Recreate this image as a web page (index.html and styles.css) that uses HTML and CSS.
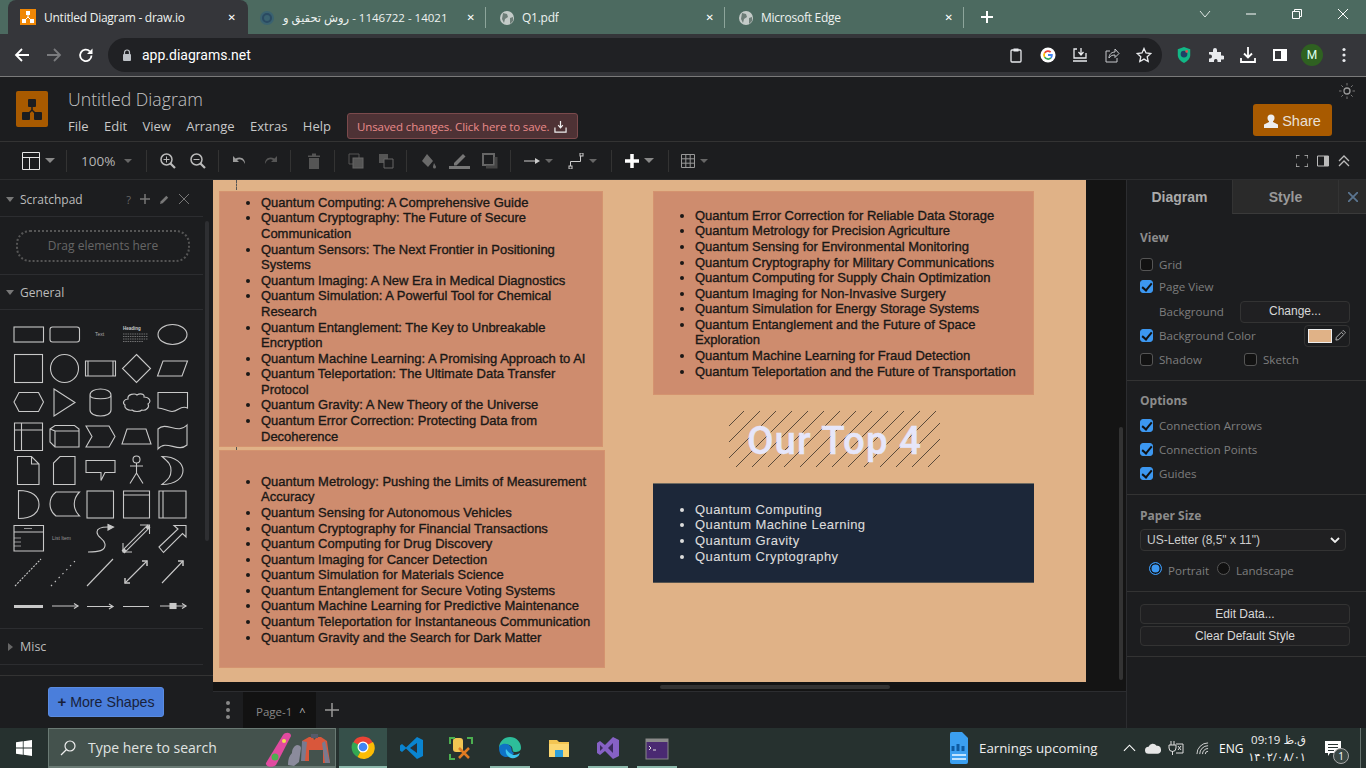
FILE: index.html
```html
<!DOCTYPE html>
<html lang="en">
<head>
<meta charset="utf-8">
<title>Untitled Diagram - draw.io</title>
<link rel="stylesheet" href="styles.css">
</head>
<body>
<div class="tabstrip">
  <div class="tab tab-active">
    <svg class="fav" viewBox="0 0 16 16"><rect width="16" height="16" fill="#f08705"/><path d="M8 4v4M8 8l-4 4M8 8l4 4" stroke="#fff" fill="none"/><rect x="6" y="2" width="4" height="4" fill="#fff"/><rect x="2" y="10" width="4" height="4" fill="#fff"/><rect x="10" y="10" width="4" height="4" fill="#fff"/></svg>
    <span class="tab-title">Untitled Diagram - draw.io</span>
    <span class="tab-x">✕</span>
  </div>
  <div class="tab tab-2">
    <svg class="fav" viewBox="0 0 16 16"><circle cx="8" cy="8" r="7" fill="#3a6270"/><circle cx="8" cy="8" r="4" fill="none" stroke="#2a4a62" stroke-width="2"/></svg>
    <span class="tab-title tab-title-rtl">14021 - 1146722 - روش تحقیق و</span>
    <span class="tab-x">✕</span>
  </div>
  <div class="tab">
    <svg class="fav" viewBox="0 0 16 16"><circle cx="8" cy="8" r="7" fill="#c4cbc8"/><path d="M4 3l4 1 1 3-3 2-1 4-2-4zM11 8l3-1 0 4-3 3z" fill="#6d7d77"/></svg>
    <span class="tab-title">Q1.pdf</span>
    <span class="tab-x">✕</span>
  </div>
  <div class="tab">
    <svg class="fav" viewBox="0 0 16 16"><circle cx="8" cy="8" r="7" fill="#c4cbc8"/><path d="M4 3l4 1 1 3-3 2-1 4-2-4zM11 8l3-1 0 4-3 3z" fill="#6d7d77"/></svg>
    <span class="tab-title">Microsoft Edge</span>
    <span class="tab-x">✕</span>
  </div>
  <svg class="newtab" viewBox="0 0 14 14"><path d="M7 1v12M1 7h12" stroke="#fff" stroke-width="2"/></svg>
  <div class="winctl">
    <svg class="wc" viewBox="0 0 12 12"><path d="M1 3l5 6 5-6" stroke="#dfe6e3" fill="none"/></svg>
    <svg class="wc" viewBox="0 0 12 12"><path d="M1 6h10" stroke="#fff"/></svg>
    <svg class="wc" viewBox="0 0 12 12"><path d="M1.500 3.500h7v7h-7zM3.500 3.500v-2h7v7h-2" stroke="#fff" fill="none"/></svg>
    <svg class="wc" viewBox="0 0 12 12"><path d="M1 1l10 10M11 1L1 11" stroke="#fff"/></svg>
  </div>
</div>

<div class="omnibar">
  <div class="navs">
    <svg class="nav" viewBox="0 0 16 16"><path d="M15 8H2M8 2L2 8l6 6" stroke="#fff" stroke-width="1.800" fill="none"/></svg>
    <svg class="nav" viewBox="0 0 16 16"><path d="M1 8h13M8 2l6 6-6 6" stroke="#7a7b7e" stroke-width="1.800" fill="none"/></svg>
    <svg class="nav" viewBox="0 0 16 16"><path d="M13.500 8.500a5.700 5.700 0 1 1-1.700-4.200" stroke="#fff" stroke-width="1.800" fill="none"/><path d="M14.500 1.500v5.500h-5.500z" fill="#fff"/></svg>
  </div>
  <div class="urlbox">
    <svg class="lock" viewBox="0 0 10 12"><path d="M2.500 5V3.500a2.500 2.500 0 0 1 5 0V5" stroke="#bdc1c6" fill="none" stroke-width="1.200"/><rect x="1" y="5" width="8" height="7" rx="1" fill="#bdc1c6"/></svg>
    <span class="url">app.diagrams.net</span>
    <div class="url-icons">
      <svg class="ui" viewBox="0 0 16 16"><rect x="3" y="3" width="10" height="12" rx="1" stroke="#e8eaed" stroke-width="1.300" fill="none"/><rect x="5.500" y="1.500" width="5" height="3" fill="#e8eaed"/></svg>
      <svg class="ui" viewBox="0 0 18 18"><circle cx="9" cy="9" r="8.500" fill="#fff"/><path d="M5.200 6.600A4.500 4.500 0 0 1 12 5.700" stroke="#ea4335" stroke-width="2" fill="none"/><path d="M5.200 6.600a4.500 4.500 0 0 0 0 4.800" stroke="#fbbc05" stroke-width="2" fill="none"/><path d="M5.200 11.400A4.500 4.500 0 0 0 12.200 12.200" stroke="#34a853" stroke-width="2" fill="none"/><path d="M9 9h4.400a4.500 4.500 0 0 1-1.200 3.200" stroke="#4285f4" stroke-width="2" fill="none"/></svg>
      <svg class="ui" viewBox="0 0 16 16"><path d="M5 2H2v9h12V6M1 14h14" stroke="#e8eaed" stroke-width="1.300" fill="none"/><path d="M9 1v6M6.500 5L9 8l2.500-3" stroke="#e8eaed" stroke-width="1.300" fill="none"/></svg>
      <svg class="ui" viewBox="0 0 16 16"><path d="M6 4H2v11h11v-4" stroke="#c7c9cc" fill="none"/><path d="M5 11c0-4 3-6 6-6V2l4 4.500-4 4V8c-3 0-5 1-6 3z" stroke="#c7c9cc" fill="none"/></svg>
      <svg class="ui" viewBox="0 0 16 16"><path d="M8 1.500l2 4.500 4.800.5-3.600 3.200 1 4.800L8 12.100 3.800 14.500l1-4.800L1.200 6.500 6 6z" stroke="#e8eaed" stroke-width="1.300" fill="none"/></svg>
    </div>
  </div>
  <div class="ext-icons">
    <svg class="ui" viewBox="0 0 16 18"><path d="M8 0l7 2.500V9c0 4-3 7-7 9-4-2-7-5-7-9V2.500z" fill="#12b886"/><circle cx="8" cy="8" r="3.800" fill="#1c4466"/><circle cx="11" cy="5" r="1.500" fill="#e05050"/></svg>
    <svg class="ui" viewBox="0 0 16 16"><path d="M1 5h4V3a2 2 0 0 1 4 0v2h4v3.500h1.500a2 2 0 0 1 0 4H13V15H9.500v-1.500a1.800 1.800 0 0 0-3.500 0V15H1v-3.500h1a2 2 0 0 0 0-4H1z" fill="#e8eaed"/></svg>
    <svg class="ui" viewBox="0 0 16 16"><path d="M8 0v10M4 6.500L8 10.500l4-4M1 11v4h14v-4" stroke="#fff" stroke-width="1.800" fill="none"/></svg>
    <svg class="ui" viewBox="0 0 16 16"><rect x="1" y="2" width="14" height="12" fill="#fff"/><rect x="3" y="4" width="6" height="8" fill="#35363a"/></svg>
    <span class="avatar">M</span>
    <svg class="ui" viewBox="0 0 16 16"><circle cx="8" cy="2.500" r="1.600" fill="#e8eaed"/><circle cx="8" cy="8" r="1.600" fill="#e8eaed"/><circle cx="8" cy="13.500" r="1.600" fill="#e8eaed"/></svg>
  </div>
</div>

<header class="app-header">
  <svg class="logo" viewBox="0 0 32 36"><rect width="32" height="36" rx="2" fill="#a85a00"/><path d="M16 13v6M16 19l-6 6M16 19l6 6" stroke="#1c1d1f" stroke-width="1.500"/><rect x="12" y="8" width="8" height="8" rx="1" fill="#1c1d1f"/><rect x="6" y="21" width="8" height="8" rx="1" fill="#1c1d1f"/><rect x="18" y="21" width="8" height="8" rx="1" fill="#1c1d1f"/></svg>
  <div class="header-body">
    <div class="doc-title">Untitled Diagram</div>
    <div class="menu-row">
      <nav class="menu"><span>File</span><span>Edit</span><span>View</span><span>Arrange</span><span>Extras</span><span>Help</span></nav>
      <div class="unsaved">Unsaved changes. Click here to save.
        <svg class="unsaved-ico" viewBox="0 0 14 14"><path d="M7 1v7M4.500 5.500L7 8.500l2.500-3M1 8v5h12V8" stroke="#eee" stroke-width="1.300" fill="none"/></svg>
      </div>
    </div>
  </div>
  <div class="header-right">
    <svg class="sun" viewBox="0 0 16 16"><circle cx="8" cy="8" r="3" stroke="#9a9a9a" fill="none" stroke-width="1.300"/><path d="M8 0v2.500M8 13.500V16M0 8h2.500M13.500 8H16M2.300 2.300l1.800 1.800M11.900 11.900l1.800 1.800M2.300 13.700l1.800-1.800M11.900 4.100l1.800-1.800" stroke="#777"/></svg>
    <div class="share"><svg class="share-ico" viewBox="0 0 14 14"><circle cx="7" cy="4" r="3.500" fill="#eee"/><path d="M5 6h4v2l5 2.500V14H0v-3.500L5 8z" fill="#eee"/></svg>Share</div>
  </div>
</header>

<div class="toolbar">
  <div class="tb-group tb-first">
    <svg class="i18" viewBox="0 0 18 18"><path d="M.5.500h17v17H.5zM.5 5.500h17M7.500 5.500v12" stroke="#e6e6e6" fill="none"/></svg>
    <i class="caret"></i>
  </div>
  <div class="tb-group tb-zoom"><span class="zoomval">100%</span><i class="caret caret-sm"></i></div>
  <div class="tb-group tb-gap">
    <svg class="i16" viewBox="0 0 16 16"><circle cx="6.500" cy="6.500" r="5.500" stroke="#bbb" stroke-width="1.500" fill="none"/><path d="M10.500 10.500L15 15" stroke="#bbb" stroke-width="2.200"/><path d="M6.500 3.500v6M3.500 6.500h6" stroke="#bbb"/></svg>
    <svg class="i16" viewBox="0 0 16 16"><circle cx="6.500" cy="6.500" r="5.500" stroke="#bbb" stroke-width="1.500" fill="none"/><path d="M10.500 10.500L15 15" stroke="#bbb" stroke-width="2.200"/><path d="M3.500 6.500h6" stroke="#bbb"/></svg>
  </div>
  <div class="tb-group tb-gap">
    <svg class="i16" viewBox="0 0 16 16"><path d="M1 3v6h6L5 7c2.500-1.500 6-.500 8 4 .500-5-4-8.500-9.500-5.500z" fill="#9a9a9a"/></svg>
    <svg class="i16" viewBox="0 0 16 16"><path d="M15 3v6H9l2-2C8.500 5.500 5 6.500 3 11c-.500-5 4-8.500 9.500-5.500z" fill="#555"/></svg>
  </div>
  <div class="tb-group tb-trash">
    <svg class="i16" viewBox="0 0 16 16"><path d="M2 2.500h12v1.500H2zM6 .500h4v2H6zM3 5h10v11H3z" fill="#555"/></svg>
  </div>
  <div class="tb-group tb-gap">
    <svg class="i16" viewBox="0 0 16 16"><path d="M1 1h10v10H1z" stroke="#555" fill="none"/><rect x="5" y="5" width="10" height="10" fill="#555" stroke="#666"/></svg>
    <svg class="i16" viewBox="0 0 16 16"><rect x="1" y="1" width="9" height="9" fill="#555"/><path d="M6 6h9v9H6z" stroke="#666" fill="#1c1d1f"/></svg>
  </div>
  <div class="tb-group tb-gap-format">
    <svg class="i16" viewBox="0 0 16 16"><path d="M6 1l6 7-5 6-6-6zM13 10c1 2 2 3 2 4a1.500 1.500 0 0 1-3 0c0-1 .500-2 1-4z" fill="#6a6a6a"/></svg>
    <svg class="i20" viewBox="0 0 21 16"><path d="M5 10L14 1l2.500 2.500-9 9H5z" fill="#777"/><rect y="13" width="21" height="3" fill="#777"/></svg>
    <svg class="i16" viewBox="0 0 16 16"><path d="M1 1h11v11H1z" stroke="#666" stroke-width="2" fill="none"/><path d="M14 4v10H4" stroke="#444" stroke-width="3" fill="none"/></svg>
  </div>
  <div class="tb-group tb-conn">
    <svg class="i16" viewBox="0 0 16 16"><path d="M0 8h12" stroke="#ccc"/><path d="M11 5l5 3-5 3z" fill="#ccc"/></svg><i class="caret caret-sm"></i>
    <svg class="i16 tb-wp" viewBox="0 0 16 16"><path d="M2.500 13V8.500h10V3" stroke="#ccc" fill="none"/><rect x="1" y="13" width="3" height="3" stroke="#ccc" fill="none"/><rect x="12" y="0" width="3" height="3" stroke="#ccc" fill="none"/></svg><i class="caret caret-sm"></i>
  </div>
  <div class="tb-group tb-plus">
    <svg class="i14" viewBox="0 0 14 14"><path d="M7 0v14M0 7h14" stroke="#fff" stroke-width="3.500"/></svg><i class="caret"></i>
  </div>
  <div class="tb-group tb-last">
    <svg class="i14" viewBox="0 0 14 14"><path d="M.5.500h13v13H.5zM.5 4.800h13M.5 9.200h13M4.800.5v13M9.200.5v13" stroke="#999" fill="none"/></svg><i class="caret caret-sm"></i>
  </div>
  <div class="tb-right">
    <svg class="i12" viewBox="0 0 12 12"><path d="M0 3.500V0h3.500M8.500 0H12v3.500M12 8.500V12H8.500M3.500 12H0V8.500" stroke="#bbb" fill="none" stroke-width="1.300"/></svg>
    <svg class="i12" viewBox="0 0 12 12"><path d="M.5 1h11v10H.5z" stroke="#bbb" fill="none"/><rect x="7" y="1" width="4.500" height="10" fill="#bbb"/></svg>
    <svg class="i12" viewBox="0 0 12 12"><path d="M1 6l5-5 5 5M1 11l5-5 5 5" stroke="#bbb" fill="none" stroke-width="1.300"/></svg>
  </div>
</div>

<main class="workspace">
  <aside class="sidebar">
    <div class="sb-row sb-scratch">
      <i class="tri-down"></i><span class="sb-title">Scratchpad</span>
      <span class="sb-tools">
        <span class="sb-q">?</span>
        <svg class="i10" viewBox="0 0 10 10"><path d="M5 0v10M0 5h10" stroke="#777" stroke-width="1.500"/></svg>
        <svg class="i11" viewBox="0 0 12 12"><path d="M1 11l1-3 6-6 2 2-6 6z" fill="#777"/></svg>
        <svg class="i10" viewBox="0 0 10 10"><path d="M0 0l10 10M10 0L0 10" stroke="#777"/></svg>
      </span>
    </div>
    <div class="sb-scratchbody"><div class="dropzone">Drag elements here</div></div>
    <div class="sb-row sb-general"><i class="tri-down"></i><span class="sb-title">General</span></div>
    <div class="shapes">
      <svg class="shapes-svg" viewBox="0 0 203 310" fill="none" stroke="#c8c8c8" stroke-width="1.100">
        <g transform="translate(0,-309)">
          <rect x="14" y="326" width="29.500" height="15"/><rect x="50" y="326" width="29.500" height="15" rx="2.500"/>
          <path d="M123 333h25M123 335.500h25M123 338h25M123 340.500h20" stroke-width=".6" stroke="#aaa" stroke-dasharray="1.500 .8"/>
          <ellipse cx="172.500" cy="333.500" rx="14.500" ry="10"/>
          <rect x="14.500" y="353.500" width="28" height="28"/><circle cx="64.500" cy="367.500" r="14"/><path d="M85.500 360h30v15h-30zM88 360v15M113 360v15"/><path d="M136.500 353.500l14 14-14 14-14-14z"/><path d="M163 360h24.500l-5.500 15h-24.500z"/>
          <path d="M19 391.500h19.500l5 9.500-5 9.500H19l-5-9.500z"/><path d="M54 388l21 13.500-21 13.500z"/><path d="M90 394c0-8 21-8 21 0v15c0 8-21 8-21 0zM90 394c0 5 21 5 21 0"/>
          <path d="M128 398c-1-5 7-6 9-4 3-2 8-1 7 2 5 0 8 4 4 7 2 3-2 7-6 6-2 2-8 2-10 0-4 1-8-2-7-5-3-2-1-6 3-6z"/><path d="M158 391.500h29.500V407c-8-4-10 6-18 3-4-1-7-3-11.500-3z"/>
          <path d="M14.500 422h28v27.500h-28zM14.500 429h28M21.500 422v27.500"/><path d="M50 428l5-3.500h19.500l4.500 3.500v18H55l-5-5zM55 430h24M55 430v16M50 428l5 2"/><path d="M86 425h23l6 10.500-6 10.500H86l6-10.500z"/><path d="M127 428h19l5 15h-29z"/><path d="M158 428c8-8 20 6 29-4v20c-9 8-21-6-29 4z"/>
        </g>
        <g transform="translate(0,-309)">
          <path d="M17.500 455.500h14l7.500 7.500v20.500H17.500zM31.500 455.500v7.500h7.500"/><path d="M60 455.500h15v28H53.500v-21.500z"/><path d="M86 459.500h29v12H105l-4 8 0-8H86z"/><circle cx="136.500" cy="458.500" r="3.500"/><path d="M136.500 462v10M130 465h13M136.500 472l-6.500 10.500M136.500 472l6.500 10.500"/><path d="M162 455.500c14 0 21 7 21 14s-7 14-21 14c7-6 9-8 9-14s-2-8-9-14z"/>
          <path d="M18.500 489.500c14 0 20.500 6 20.500 14s-6.500 14-20.500 14z"/><path d="M56 491h23.500c-7 7-7 17 0 24H56c-8-6-8-18 0-24z"/><rect x="87" y="490" width="26.500" height="27"/><path d="M123.500 490h26v27h-26zM123.500 494h26"/><path d="M159 490h27v27h-27zM163 490v27"/>
          <path d="M14 524.500h29.500V550H14zM14 531h29.500"/><path d="M14 537h7M14 541h7M14 545h7M24 527.500h8" stroke-width=".7"/><path d="M88 551c10 0 18-1 17-8-1-6-8-6-8-12 0-4 6-5 11-5"/><path d="M108 523.500l5.500 2.500-5.500 3z" fill="#c8c8c8"/>
          <path d="M123 551l26-26" stroke-width="4"/><path d="M125.500 548.500l21-21" stroke="#1c1d1f" stroke-width="2"/><path d="M123 542v9h9M140 524h9.500v9"/><path d="M159 546l19-18-4-3.500h12v11.500l-3.500-3.500-19 19z"/>
          <path d="M15 585l26-27" stroke-dasharray="2 1.300"/><path d="M51 585l26-27" stroke-dasharray="1.500 4"/><path d="M87 585l26-27"/><path d="M125 582l22-22M162 582l21-22"/><path d="M125 577v5h5M142 560h5v5M178 560h5v5" stroke-width="1.500"/>
          <path d="M14 605.500h29" stroke-width="3"/><path d="M52 605h26M87 605.500h26M123 605.500h26M160 605h26"/><path d="M74 602.500l4 2.500-4 2.500M109 603l4 2.500-4 2.500M182 602.500l4 2.500-4 2.500" stroke-width="1.200"/><rect x="170" y="602.500" width="6" height="5" fill="#c8c8c8"/>
        </g>
        <text x="95" y="26" class="sh-text">Text</text>
        <text x="123" y="20" class="sh-head">Heading</text>
        <text x="52" y="230" class="sh-li">List Item</text>
      </svg>
    </div>
    <div class="sb-row sb-misc"><i class="tri-right"></i><span class="sb-title sb-misc-t">Misc</span></div>
    <div class="sb-rest"></div>
    <div class="sb-foot"><div class="more-shapes"><b class="plus">+</b> More Shapes</div></div>
    <i class="sb-scroll"></i>
  </aside>

  <section class="center">
    <div class="canvas">
      <div class="paper">
        <i class="guide guide-a"></i>
        <i class="guide guide-b"></i>
        <div class="node node-a">
          <ul>
            <li>Quantum Computing: A Comprehensive Guide</li>
            <li>Quantum Cryptography: The Future of Secure Communication</li>
            <li>Quantum Sensors: The Next Frontier in Positioning Systems</li>
            <li>Quantum Imaging: A New Era in Medical Diagnostics</li>
            <li>Quantum Simulation: A Powerful Tool for Chemical Research</li>
            <li>Quantum Entanglement: The Key to Unbreakable Encryption</li>
            <li>Quantum Machine Learning: A Promising Approach to AI</li>
            <li>Quantum Teleportation: The Ultimate Data Transfer Protocol</li>
            <li>Quantum Gravity: A New Theory of the Universe</li>
            <li>Quantum Error Correction: Protecting Data from Decoherence</li>
          </ul>
        </div>
        <div class="node node-b">
          <ul>
            <li>Quantum Metrology: Pushing the Limits of Measurement Accuracy</li>
            <li>Quantum Sensing for Autonomous Vehicles</li>
            <li>Quantum Cryptography for Financial Transactions</li>
            <li>Quantum Computing for Drug Discovery</li>
            <li>Quantum Imaging for Cancer Detection</li>
            <li>Quantum Simulation for Materials Science</li>
            <li>Quantum Entanglement for Secure Voting Systems</li>
            <li>Quantum Machine Learning for Predictive Maintenance</li>
            <li>Quantum Teleportation for Instantaneous Communication</li>
            <li>Quantum Gravity and the Search for Dark Matter</li>
          </ul>
        </div>
        <div class="node node-c">
          <ul>
            <li>Quantum Error Correction for Reliable Data Storage</li>
            <li>Quantum Metrology for Precision Agriculture</li>
            <li>Quantum Sensing for Environmental Monitoring</li>
            <li>Quantum Cryptography for Military Communications</li>
            <li>Quantum Computing for Supply Chain Optimization</li>
            <li>Quantum Imaging for Non-Invasive Surgery</li>
            <li>Quantum Simulation for Energy Storage Systems</li>
            <li>Quantum Entanglement and the Future of Space Exploration</li>
            <li>Quantum Machine Learning for Fraud Detection</li>
            <li>Quantum Teleportation and the Future of Transportation</li>
          </ul>
        </div>
        <div class="node node-title">Our Top 4</div>
        <div class="node node-dark">
          <ul>
            <li>Quantum Computing</li>
            <li>Quantum Machine Learning</li>
            <li>Quantum Gravity</li>
            <li>Quantum Cryptography</li>
          </ul>
        </div>
      </div>
      <i class="scroll-h"></i>
      <i class="scroll-v"></i>
    </div>
    <div class="pagebar">
      <svg class="kebab" viewBox="0 0 4 18"><circle cx="2" cy="2" r="2" fill="#888"/><circle cx="2" cy="9" r="2" fill="#888"/><circle cx="2" cy="16" r="2" fill="#888"/></svg>
      <div class="pagetab">Page-1 <span class="pagecaret">^</span></div>
      <svg class="pageadd" viewBox="0 0 14 14"><path d="M7 0v14M0 7h14" stroke="#999" stroke-width="1.500"/></svg>
    </div>
  </section>

  <aside class="format">
    <div class="fm-tabs">
      <div class="fm-tab fm-tab-on">Diagram</div>
      <div class="fm-tab">Style</div>
      <div class="fm-close"><svg class="i10" viewBox="0 0 10 10"><path d="M0 0l10 10M10 0L0 10" stroke="#5b7590" stroke-width="1.800"/></svg></div>
    </div>
    <section class="fm-sec fm-view">
      <h3 class="fm-h">View</h3>
      <label class="row row-grid"><i class="cb"></i>Grid</label>
      <label class="row"><i class="cb cb-on"></i>Page View</label>
      <div class="row row-bg"><span class="row-indent">Background</span><span class="btn btn-change">Change...</span></div>
      <div class="row row-color"><i class="cb cb-on"></i>Background Color
        <span class="swatchbox"><i class="swatch"></i><svg class="i11" viewBox="0 0 12 12"><path d="M1 11l.5-3L7 2.500 9.500 5 4 10.500zM8 1.500l1-1 2.500 2.500-1 1" stroke="#bbb" fill="none"/></svg></span>
      </div>
      <div class="row row-shadow"><label class="half"><i class="cb"></i>Shadow</label><label class="half"><i class="cb"></i>Sketch</label></div>
    </section>
    <section class="fm-sec fm-options">
      <h3 class="fm-h">Options</h3>
      <label class="row row24 row-first"><i class="cb cb-on"></i>Connection Arrows</label>
      <label class="row row24"><i class="cb cb-on"></i>Connection Points</label>
      <label class="row row24"><i class="cb cb-on"></i>Guides</label>
    </section>
    <section class="fm-sec fm-paper">
      <h3 class="fm-h">Paper Size</h3>
      <div class="select">US-Letter (8,5" x 11")<svg class="selcaret" viewBox="0 0 10 6"><path d="M1 1l4 4 4-4" stroke="#eee" stroke-width="1.800" fill="none"/></svg></div>
      <div class="row radios"><i class="radio radio-on"></i><span class="radio-l1">Portrait</span><i class="radio"></i><span>Landscape</span></div>
    </section>
    <section class="fm-sec fm-actions">
      <div class="btn btn-wide">Edit Data...</div>
      <div class="btn btn-wide">Clear Default Style</div>
    </section>
  </aside>
</main>

<footer class="taskbar">
  <svg class="winlogo" viewBox="0 0 16 16"><path d="M0 2.300l6.800-1v6.300H0zM7.600 1.200L16 0v7.600H7.600zM0 8.400h6.800v6.300l-6.800-1zM7.600 8.400H16V16l-8.400-1.200z" fill="#fff"/></svg>
  <div class="search">
    <svg class="i16" viewBox="0 0 16 16"><circle cx="10" cy="6" r="5" stroke="#eee" fill="none" stroke-width="1.200"/><path d="M6.500 9.500L1 15" stroke="#eee" stroke-width="1.200"/></svg>
    <span class="search-t">Type here to search</span>
    <svg class="search-art" viewBox="0 0 66 36"><path d="M1 31L18 3c2-3 8-3 8 1L11 33c-3 3-11 2-10-2z" fill="#e14aa0"/><circle cx="10" cy="25" r="3.500" fill="#4caf50"/><circle cx="19" cy="9" r="2" fill="#f3e04e"/><path d="M23 33c0-5 1-9 4-12 0-4 2-7 5-8 2 0 4 1 4 3l-2 14-5 4z" fill="#8b8b9c"/><path d="M37 9l7-4 4 0 1 3 3-3 4 0 6 4 3 22H58V18H44v11h-7z" fill="#d9573b"/><path d="M37 9l-1 20h4l2-19zM60 9l5 22h-5l-3-20z" fill="#7a7a8e"/><path d="M46 2h7v4h-7z" fill="#565a6a"/></svg>
  </div>
  <div class="tb-apps">
    <div class="app app-on"><svg class="app-i" viewBox="0 0 24 24"><path d="M12 12L2 8A11 11 0 0 1 22 8z" fill="#ea4335"/><path d="M12 12l-5.500 10A11 11 0 0 1 2 7z" fill="#34a853"/><path d="M12 12l10-5a11 11 0 0 1-15.500 15z" fill="#fbbc05"/><circle cx="12" cy="12" r="5.500" fill="#fff"/><circle cx="12" cy="12" r="4.300" fill="#4285f4"/></svg></div>
    <div class="app"><svg class="app-i" viewBox="0 0 24 24"><path d="M17 1l6 3v16l-6 3-11-10.500L2 16l-2-1.500v-5L2 8l4 3.500z" fill="#0a84d0"/><path d="M17 7l-7 5 7 5z" fill="#26313a"/></svg></div>
    <div class="app"><svg class="app-i" viewBox="0 0 24 24"><rect x="4" y="2" width="10" height="14" rx="3" fill="#f3c552"/><path d="M1 8V2h5M23 8V2h-5M1 18v5h5" stroke="#4caf50" stroke-width="2" fill="none"/><path d="M10 12l10 10M20 12L10 22" stroke="#e07b22" stroke-width="2.500"/></svg></div>
    <div class="app app-ul"><svg class="app-i" viewBox="0 0 24 24"><path d="M1 12a11 11 0 0 1 22 0c0 3-3 4-6 4-4 0-1-3-4-6-4-3-10-1-12 2z" fill="#2dbd9a"/><path d="M1 12c0-4 8-6 11-2 3 2 0 5 4 7-4 6-15 6-15-5z" fill="#0f72c5"/><path d="M8 13a7 7 0 0 0 14 4c-5 3-9 3-14-4z" fill="#3bc4ee"/></svg></div>
    <div class="app"><svg class="app-i" viewBox="0 0 24 24"><path d="M2 4h8l2 2h10v15H2z" fill="#f3c552"/><rect x="2" y="8" width="20" height="13" fill="#fbd771"/><rect x="8" y="14" width="8" height="7" fill="#2e9fdb"/></svg></div>
    <div class="app app-ul"><svg class="app-i" viewBox="0 0 24 24"><path d="M17 1l6 3v16l-6 3-8-8-5 4-3-2V7l3-2 5 4z" fill="#8661c5"/><path d="M17 7l-5 5 5 5z" fill="#3a2a5c"/><path d="M4 9v6l3-3z" fill="#3a2a5c"/></svg></div>
    <div class="app app-ul"><svg class="app-i" viewBox="0 0 24 24"><rect x="1" y="3" width="22" height="20" fill="#4a2a72" stroke="#888"/><path d="M1 3h22v3H1z" fill="#8a8a8a"/><path d="M4 10l2 2-2 2M8 14h3" stroke="#ddd" fill="none"/></svg></div>
  </div>
  <div class="tray">
    <svg class="news" viewBox="0 0 18 32"><path d="M0 2a2 2 0 0 1 2-2h10l6 6v24a2 2 0 0 1-2 2H2a2 2 0 0 1-2-2z" fill="#3b9ff0"/><path d="M3 14v5M8 12v7M13 14v5" stroke="#0e5aa0" stroke-width="3"/><path d="M2 23h14M2 27h14" stroke="#bfe3ff" stroke-width="2"/></svg>
    <span class="news-t">Earnings upcoming</span>
    <svg class="chev" viewBox="0 0 14 8"><path d="M1 7l6-6 6 6" stroke="#fff" fill="none" stroke-width="1.200"/></svg>
    <svg class="t-cloud" viewBox="0 0 18 12"><path d="M4 12a4 4 0 0 1 0-8 5 5 0 0 1 9-1 4.500 4.500 0 0 1 1 9z" fill="#e6e6e6"/></svg>
    <svg class="t-batt" viewBox="0 0 16 14"><path d="M3 0v4M6 0v4M1 4h7v3a3 3 0 0 1-7 0zM4.500 10v4" stroke="#ddd" fill="none"/><path d="M8 3h7v9H8" stroke="#ddd" fill="none"/><path d="M10 5l3 4M13 5l-3 4" stroke="#ddd"/></svg>
    <svg class="t-wifi" viewBox="0 0 14 14"><path d="M1 13A12 12 0 0 1 13 1M4 13a9 9 0 0 1 9-9M7 13a6 6 0 0 1 6-6M10 13a3 3 0 0 1 3-3" stroke="#ddd" fill="none"/></svg>
    <span class="eng">ENG</span>
    <div class="clock"><span class="clock-t">ق.ظ 09:19</span><span class="clock-d">۱۴۰۲/۰۸/۰۱</span></div>
    <div class="notif">
      <svg class="notif-i" viewBox="0 0 16 16"><path d="M0 0h16v12H5l-2 3v-3H0z" fill="#fff"/><path d="M3 3.500h10M3 6.500h10M3 9.500h6" stroke="#2a3533"/></svg>
      <span class="notif-b">1</span>
    </div>
    <i class="showdesk"></i>
  </div>
</footer>
</body>
</html>
```

FILE: styles.css
```css
* { box-sizing: border-box; }
html, body { margin: 0; padding: 0; }
body {
  width: 1366px; height: 768px; overflow: hidden;
  display: flex; flex-direction: column;
  font-family: "Open Sans", "DejaVu Sans", sans-serif;
  background: #1c1d1f; color: #ccc;
}
svg { display: block; flex: none; }
i { display: block; flex: none; }

/* chrome tabs */
.tabstrip { height: 34px; background: #4c6a60; display: flex; padding-left: 8px; flex: none; align-items: stretch; }
.tab { width: 239px; display: flex; align-items: center; padding: 0 10px 0 13px; position: relative; color: #eef2f0; font-size: 12px; border-right: 1px solid #8da59b; margin: 7px 0 6px; }
.tab-active { width: 240px; background: #35363a; border-radius: 8px 8px 0 0; border-right: 0; margin: 0; padding: 0 12px; }
.tab-2 { width: 238px; padding-left: 11px; }
.fav { width: 16px; height: 16px; margin-right: 7px; }
.tab-active .fav { margin-right: 8px; }
.tab-2 .fav { margin-right: 8px; }
.tab-title { font-size: 12px; white-space: nowrap; overflow: hidden; letter-spacing: -.25px; }
.tab-title-rtl { font-size: 11.500px; direction: rtl; letter-spacing: -.3px; overflow: visible; }
.tab-x { margin-left: auto; font-size: 10px; color: #fff; font-family: "DejaVu Sans", sans-serif; }
.newtab { width: 14px; height: 14px; margin: 10px 0 0 16px; }
.winctl { margin-left: auto; display: flex; gap: 34px; padding: 8px 17px 0 0; }
.wc { width: 12px; height: 12px; }

/* omnibar */
.omnibar { height: 43px; flex: none; background: #35363a; border-bottom: 1px solid #7a7a7a; display: flex; align-items: center; padding: 0 14px; }
.navs { display: flex; gap: 16px; width: 94px; }
.nav { width: 16px; height: 16px; }
.urlbox { width: 1054px; height: 34px; border-radius: 17px; background: #202124; display: flex; align-items: center; padding: 0 10px 0 14px; }
.lock { width: 10px; height: 12px; margin-right: 10px; }
.url { font-family: Roboto, sans-serif; font-size: 14px; color: #fff; }
.url-icons { margin-left: auto; display: flex; gap: 16px; align-items: center; }
.ui { width: 16px; height: 16px; }
.ext-icons { display: flex; align-items: center; gap: 16px; margin-left: 14px; }
.avatar { width: 22px; height: 22px; margin: 0 -3px; border-radius: 50%; background: #2f6121; color: #dfe; font: 12px/22px Roboto, sans-serif; text-align: center; }

/* app header */
.app-header { height: 65px; flex: none; display: flex; border-bottom: 1px solid #333; padding: 14px 34px 0 16px; background: #1c1d1f; }
.logo { width: 32px; height: 36px; }
.header-body { margin-left: 20px; }
.doc-title { font-size: 17.700px; line-height: 22px; margin-top: -3px; color: #c4c4c4; font-weight: 300; }
.menu-row { display: flex; align-items: center; margin-top: 3px; }
.menu { display: flex; gap: 15.400px; font-size: 13px; color: #c8c8c8; width: 279px; }
.unsaved { width: 231px; height: 26px; background: #4e3235; border: 1px solid #7b4a4c; border-radius: 3px; color: #e98a8a; font-size: 11.500px; display: flex; align-items: center; padding-left: 9px; white-space: nowrap; gap: 5px; letter-spacing: -.1px; }
.unsaved-ico { width: 13px; height: 13px; }
.header-right { margin-left: auto; position: relative; display: flex; flex-direction: column; align-items: flex-end; width: 79px; }
.sun { width: 16px; height: 16px; position: absolute; top: -8px; right: -23px; }
.share { margin-top: 13px; width: 79px; height: 32px; background: #a85a00; border-radius: 3px; display: flex; align-items: center; justify-content: center; gap: 4px; padding-top: 1px; font-family: "Liberation Sans", sans-serif; font-size: 14.500px; color: #e8e0d8; }
.share-ico { width: 14px; height: 14px; }

/* toolbar */
.toolbar { height: 38px; flex: none; border-bottom: 1px solid #2c2d2f; display: flex; align-items: center; padding-left: 9px; background: #1c1d1f; }
.tb-group { display: flex; align-items: center; padding: 0 13px; height: 22px; border-right: 1px solid #333; }
.tb-first { padding-right: 11px; }
.tb-gap { gap: 14px; padding: 0 12px 0 13px; }
.tb-trash { padding: 0 12px 0 15px; }
.tb-gap-format { gap: 12px; padding: 0 12px 0 14px; }
.tb-zoom { padding: 0 14px; }
.tb-conn { padding: 0 14px 0 13px; }
.tb-wp { margin-left: 15px; }
.tb-plus { padding: 0 14px 0 13px; }
.tb-last { border-right: 0; padding-left: 12px; }
.i18 { width: 18px; height: 18px; }
.i16 { width: 16px; height: 16px; }
.i20 { width: 21px; height: 16px; }
.i14 { width: 14px; height: 14px; }
.i12 { width: 12px; height: 12px; }
.i11 { width: 11px; height: 11px; }
.i10 { width: 10px; height: 10px; }
.caret { width: 0; height: 0; margin-left: 5px; border: 5px solid transparent; border-top: 5px solid #888; border-bottom: 0; }
.caret-sm { border-width: 4.500px 4px 0; border-top-color: #666; }
.zoomval { font-size: 13.500px; color: #b4b4b4; width: 38px; text-align: left; }
.tb-right { margin-left: auto; display: flex; gap: 9px; padding-right: 16px; }

/* workspace */
.workspace { flex: 1; min-height: 0; display: flex; }
.sidebar { width: 213px; flex: none; position: relative; display: flex; flex-direction: column; background: #1c1d1f; }
.sb-row { display: flex; align-items: center; width: 203px; border-bottom: 1px solid #2c2d30; padding-left: 6px; flex: none; }
.sb-scratch { height: 37px; padding-top: 2px; }
.sb-general { height: 35px; }
.sb-title { margin-left: 6px; font-size: 12px; color: #bbb; }
.sb-misc-t { margin-left: 7px; font-size: 12.500px; }
.tri-down { width: 0; height: 0; border: 4px solid transparent; border-top: 5px solid #777; border-bottom: 0; }
.tri-right { width: 0; height: 0; border: 4px solid transparent; border-left: 5px solid #666; border-right: 0; margin-left: 2px; }
.sb-tools { margin-left: auto; display: flex; align-items: center; gap: 9px; padding-right: 14px; }
.sb-q { font-size: 11px; color: #666; }
.sb-scratchbody { width: 203px; height: 58px; border-bottom: 1px solid #2c2d30; padding: 13px 13px 0 16px; flex: none; }
.dropzone { width: 174px; height: 32px; border: 2px dotted #555; border-radius: 14px; text-align: center; font-size: 12px; line-height: 28px; color: #666; }
.shapes { height: 319px; width: 203px; border-bottom: 1px solid #2c2d30; flex: none; }
.shapes-svg { width: 203px; height: 310px; }
.sh-text { font: 5px "Liberation Sans", sans-serif; fill: #aaa; stroke: none; }
.sh-head { font: bold 4.500px "Liberation Sans", sans-serif; fill: #ccc; stroke: none; }
.sh-li { font: 5px "Liberation Sans", sans-serif; fill: #999; stroke: none; }
.sb-misc { height: 36px; }
.sb-rest { height: 11px; flex: none; border-bottom: 1px solid #333; }
.sb-foot { flex: 1; padding: 11px 0 0 48px; }
.more-shapes { width: 116px; height: 30px; border-radius: 3px; background: #4a7edb; border: 1px solid #5a8be0; color: #18213a; font: 14.200px/28px "Liberation Sans", sans-serif; text-align: center; white-space: nowrap; }
.plus { font-size: 15px; }
.sb-scroll { position: absolute; left: 205px; top: 41px; width: 4px; height: 320px; background: #2e2f32; border-radius: 2px; }

.center { width: 913px; flex: none; display: flex; flex-direction: column; }
.canvas { height: 512px; flex: none; position: relative; background: #141414; border-bottom: 1px solid #2c2d30; overflow: hidden; }
.paper { width: 873px; height: 502px; background: #e0b287; position: relative; }
.scroll-h { position: absolute; left: 447px; top: 505px; width: 230px; height: 4px; border-radius: 2px; background: #333; }
.scroll-v { position: absolute; left: 906px; top: 247px; width: 4px; height: 253px; border-radius: 2px; background: #333; }
.guide { position: absolute; left: 23px; width: 0; border-left: 1px dashed #555; }
.guide-a { top: 0; height: 10px; }
.guide-b { top: 266px; height: 5px; }

.node { position: absolute; display: flex; flex-direction: column; justify-content: center; font-family: "Liberation Sans", Arial, sans-serif; font-size: 13px; line-height: 15.600px; font-weight: 400; color: #1a1816; -webkit-text-stroke: .35px #1a1816; }
.node ul { margin: 0; padding: 1px 12px 0 41px; }
.node-a { left: 6px; top: 11px; width: 384px; height: 256px; background: #ce8c6e; border: 1px solid #d4936f; }
.node-b { left: 6px; top: 270px; width: 386px; height: 218px; background: #ce8c6e; border: 1px solid #d4936f; }
.node-c { left: 440px; top: 11px; width: 381px; height: 204px; background: #ce8c6e; border: 1px solid #d4936f; }
.node-title { left: 516px; top: 231px; width: 211px; height: 56px; align-items: center; padding-top: 3px; font-family: Roboto, sans-serif; font-size: 38.500px; line-height: 50px; letter-spacing: 1px; font-weight: 500; color: #e6e6fa; -webkit-text-stroke: .4px #e6e6fa; background: repeating-linear-gradient(135deg, transparent 0 10.300px, #5a4a3a 10.300px 11.300px); }
.node-dark { left: 440px; top: 303px; width: 381px; height: 100px; background: #1c2739; border-top: 1px solid #6f6a60; border-bottom: 1px solid #55534f; color: #dcdcdc; -webkit-text-stroke: .1px #dcdcdc; letter-spacing: .42px; }
.node-dark ul { padding: 0 12px 0 42px; }

.pagebar { flex: 1; display: flex; align-items: stretch; background: #1c1d1f; padding-left: 13px; }
.kebab { width: 4px; height: 18px; align-self: center; margin-right: 13px; }
.pagetab { width: 73px; background: #121212; color: #888; font-size: 11.500px; display: flex; align-items: center; padding: 2px 0 0 13px; gap: 4px; }
.pagecaret { color: #bbb; font-size: 11px; margin-left: 3px; }
.pageadd { width: 14px; height: 14px; align-self: center; margin-left: 9px; }

/* format panel */
.format { width: 240px; flex: none; border-left: 1px solid #2c2d30; background: #1c1d1f; }
.fm-tabs { display: flex; height: 34px; font-family: "Liberation Sans", sans-serif; }
.fm-tab { width: 106px; background: #2a2a2a; border-bottom: 1px solid #3a3a3a; border-left: 1px solid #333; color: #999; font-size: 14px; font-weight: 700; line-height: 35px; text-align: center; }
.fm-tab-on { background: #1c1d1f; border: 0; width: 105px; color: #aaa; }
.fm-close { width: 28px; background: #2a2a2a; border-bottom: 1px solid #3a3a3a; border-left: 1px solid #333; display: flex; align-items: center; justify-content: center; }
.fm-sec { padding-left: 13px; border-bottom: 1px solid #333; }
.fm-h { margin: 0; font-size: 12px; font-weight: 700; line-height: 16px; color: #8c8c8c; }
.row { display: flex; align-items: center; height: 22px; padding-bottom: 1px; font-size: 11.600px; color: #7e7e7e; }
.fm-view { height: 167px; padding-top: 16px; }
.row-grid { margin-top: 8px; }
.row-bg { height: 24px; margin-top: 2px; }
.row-indent { padding-left: 19px; width: 100px; }
.row-color { margin-top: 1px; position: relative; }
.row-shadow { margin-top: 2px; }
.half { display: flex; align-items: center; width: 104px; }
.cb { width: 13px; height: 13px; border-radius: 3px; border: 1px solid #555; background: #121212; margin-right: 6px; }
.cb-on { background: #3c97f0; border-color: #3c97f0; position: relative; }
.cb-on::after { content: ""; position: absolute; left: 3px; top: 0; width: 4px; height: 8px; border: solid #111; border-width: 0 2px 2px 0; transform: rotate(40deg); }
.btn { border: 1px solid #333; border-radius: 4px; background: #202022; color: #d8d8d8; font: 12px/18px "Liberation Sans", sans-serif; text-align: center; }
.btn-change { width: 110px; height: 22px; line-height: 18px; }
.swatchbox { margin-left: auto; margin-right: 16px; width: 46px; height: 22px; border: 1px solid #333; border-radius: 4px; display: flex; align-items: center; padding-left: 3px; gap: 3px; }
.swatch { width: 24px; height: 14px; background: #e0b287; border: 1px solid #eee; }
.row24 { height: 24px; }
.row-first { margin-top: 5px; }
.fm-options { height: 114px; padding-top: 12px; }
.fm-paper { height: 97px; padding-top: 13px; }
.select { width: 206px; height: 22px; margin-top: 5px; border: 1px solid #333; border-radius: 4px; background: #202022; color: #ccc; font: 12px/20px "Liberation Sans", sans-serif; padding-left: 6px; position: relative; }
.selcaret { position: absolute; right: 5px; top: 7px; width: 10px; height: 6px; }
.radios { margin-top: 7px; padding: 2px 0 0 9px; }
.radio { width: 13px; height: 13px; border-radius: 50%; border: 1px solid #555; background: #111; margin-right: 6px; margin-top: -3px; }
.radio-on { border-color: #3c97f0; background: #3c97f0; box-shadow: inset 0 0 0 1.500px #111; }
.radio-l1 { width: 49px; }
.fm-actions { height: 65px; padding-top: 12px; }
.btn-wide { width: 210px; height: 20px; margin-bottom: 2px; }

/* taskbar */
.taskbar { height: 40px; flex: none; background: #26312f; display: flex; align-items: stretch; color: #fff; }
.winlogo { width: 16px; height: 16px; margin: 12px 16px 0 16px; }
.search { width: 288px; background: #44524d; border: 1px solid #6a7a74; border-bottom-width: 2px; display: flex; align-items: center; padding-left: 11px; position: relative; }
.search-t { margin-left: 12px; font-size: 14px; color: #e0e4e2; }
.search-art { position: absolute; left: 216px; top: 3px; width: 66px; height: 36px; }
.tb-apps { display: flex; gap: 1px; margin-left: 3px; }
.app { width: 48px; display: flex; align-items: center; justify-content: center; position: relative; }
.app-on { background: #36504a; border-bottom: 2px solid #8cb8ab; }
.app-ul::after { content: ""; position: absolute; left: 4px; right: 4px; bottom: 0; height: 2px; background: #8cb8ab; }
.app-i { width: 24px; height: 24px; }
.tray { margin-left: auto; display: flex; align-items: center; padding-right: 5px; }
.news { width: 18px; height: 32px; margin-right: 11px; }
.news-t { font-size: 13.300px; width: 144px; color: #eee; }
.chev { width: 13px; height: 8px; margin-right: 9px; }
.t-cloud { width: 16px; height: 11px; margin-right: 7px; }
.t-batt { width: 16px; height: 14px; margin-right: 12px; }
.t-wifi { width: 13px; height: 13px; margin-right: 10px; }
.eng { font-size: 12px; width: 31px; }
.clock { width: 56px; display: flex; flex-direction: column; align-items: flex-end; font-size: 11.500px; line-height: 17px; color: #eee; font-family: "Open Sans", "DejaVu Sans", sans-serif; white-space: nowrap; }
.notif { width: 46px; margin-left: 8px; position: relative; height: 40px; }
.notif-i { position: absolute; left: 11px; top: 13px; width: 16px; height: 16px; }
.notif-b { position: absolute; left: 19px; top: 20px; width: 16px; height: 16px; border: 1px solid #aaa; border-radius: 50%; background: #3a4744; font-size: 10px; line-height: 14px; text-align: center; }
.showdesk { width: 1px; height: 40px; background: #66736f; }
```
